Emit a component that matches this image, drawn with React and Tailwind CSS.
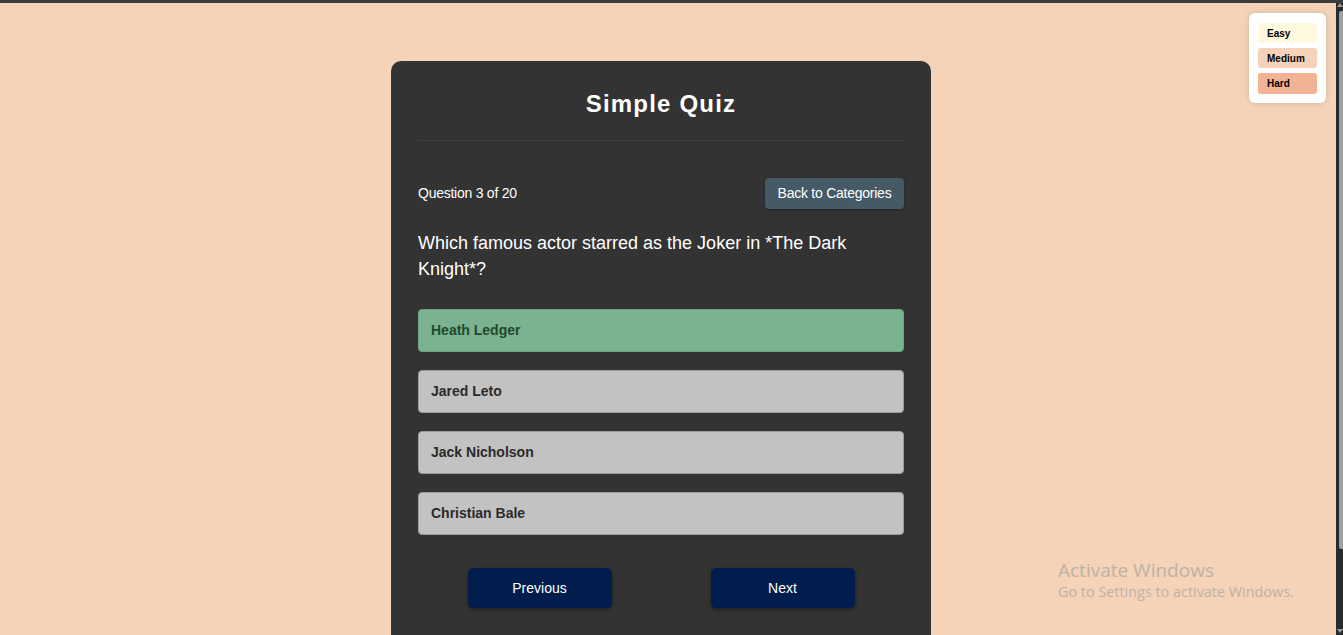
import React, { useState } from 'react';

const options = ['Heath Ledger', 'Jared Leto', 'Jack Nicholson', 'Christian Bale'];

const Legend = () => (
    <div className="absolute top-[10px] left-[1249px] w-[77px] bg-white rounded-md shadow-[0_0_6px_rgba(0,0,0,0.15)] px-[9px] pt-[10px] pb-[9px] flex flex-col gap-[5px]">
        <div className="h-[20px] rounded-[3px] bg-[#fdf8de] pl-[9px] text-[10px] font-bold text-black flex items-center">Easy</div>
        <div className="h-[20px] rounded-[3px] bg-[#f5d2b8] pl-[9px] text-[10px] font-bold text-black flex items-center">Medium</div>
        <div className="h-[21px] rounded-[3px] bg-[#f2b294] pl-[9px] text-[10px] font-bold text-black flex items-center">Hard</div>
    </div>
);

export default function App() {
    const [selected] = useState(0);

    return (
        <div className="h-screen w-full overflow-hidden flex flex-col bg-[#f5d3b8] font-['Liberation_Sans',Arial,sans-serif]">
            {/* top edge of browser frame */}
            <div className="h-[3px] bg-[#3c3c3c] shrink-0" />

            <div className="flex flex-1 min-h-0">
                <div className="relative flex-1">
                    {/* Quiz card */}
                    <div className="ml-[391px] mt-[58px] w-[540px] h-[600px] bg-[#333333] rounded-[10px] px-[27px] pt-[29px]">
                        <h1 className="text-center text-white text-[24px] tracking-[1.2px] font-bold leading-[28px] pb-[22px] border-b border-[#3f3f3f]">
                            Simple Quiz
                        </h1>

                        <div className="flex items-center justify-between mt-[37px]">
                            <span className="text-[14px] tracking-[-0.25px] text-white">Question 3 of 20</span>
                            <button className="h-[31px] w-[139px] rounded-[4px] bg-[#455a64] text-white text-[14px] tracking-[-0.25px] shadow-[0_1px_3px_rgba(0,0,0,0.3)]">
                                Back to Categories
                            </button>
                        </div>

                        <p className="mt-[21px] text-white text-[18px] leading-[26px]">
                            Which famous actor starred as the Joker in *The Dark Knight*?
                        </p>

                        <div className="mt-[27px] flex flex-col gap-[18px]">
                            {options.map((opt, i) => (
                                <div
                                    key={opt}
                                    className={`h-[43px] rounded-[4px] border pl-[12px] flex items-center text-[14px] font-bold ${i === selected
                                        ? 'bg-[#7bb391] border-[#6fa283] text-[#1e4a2c]'
                                        : 'bg-[#c2c2c2] border-[#9a9a9a] text-[#2b2b2b]'
                                        }`}
                                >
                                    {opt}
                                </div>
                            ))}
                        </div>

                        <div className="mt-[33px] flex justify-around">
                            <button className="w-[144px] h-[40px] rounded-[5px] bg-[#001d4d] text-white text-[14px] shadow-[0_2px_4px_rgba(0,0,0,0.35)]">
                                Previous
                            </button>
                            <button className="w-[144px] h-[40px] rounded-[5px] bg-[#001d4d] text-white text-[14px] shadow-[0_2px_4px_rgba(0,0,0,0.35)]">
                                Next
                            </button>
                        </div>
                    </div>

                    <Legend />

                    {/* Windows watermark */}
                    <div className="absolute left-[1058px] top-[555px] text-[#bfb1a5] font-['Open_Sans',sans-serif] pointer-events-none">
                        <div className="text-[19px] leading-[24px]">Activate Windows</div>
                        <div className="text-[14.4px] leading-[20px]">Go to Settings to activate Windows.</div>
                    </div>
                </div>

                {/* scrollbar */}
                <div className="w-[7px] bg-[#2b2b2b] relative shrink-0">
                    <div className="absolute top-[0px] left-[1px] w-0 h-0 border-l-[3px] border-r-[3px] border-b-[4px] border-l-transparent border-r-transparent border-b-[#9a9a9a]" />
                    <div className="absolute top-[8px] left-[3px] w-[4px] h-[538px] bg-[#a0a0a0] rounded-l-[2px]" />
                    <div className="absolute bottom-[2px] left-[1px] w-0 h-0 border-l-[3px] border-r-[3px] border-t-[4px] border-l-transparent border-r-transparent border-t-[#9a9a9a]" />
                </div>
            </div>
        </div>
    );
}
